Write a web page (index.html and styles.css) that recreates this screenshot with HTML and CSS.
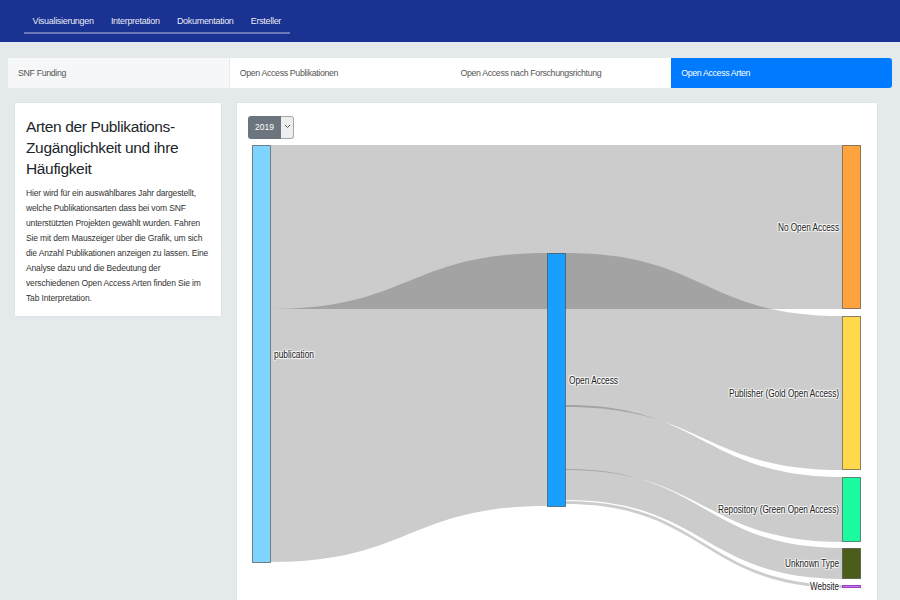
FILE: index.html
```html
<!DOCTYPE html>
<html lang="de">
<head>
<meta charset="utf-8">
<title>Open Access Arten</title>
<link rel="stylesheet" href="styles.css">
</head>
<body>
<header class="navbar">
  <ul class="nav">
    <li class="nav-item">Visualisierungen</li>
    <li class="nav-item">Interpretation</li>
    <li class="nav-item">Dokumentation</li>
    <li class="nav-item">Ersteller</li>
  </ul>
</header>
<nav class="tabs">
  <div class="tab tab-first">SNF Funding</div>
  <div class="tab">Open Access Publikationen</div>
  <div class="tab">Open Access nach Forschungsrichtung</div>
  <div class="tab tab-active">Open Access Arten</div>
</nav>
<main class="content">
  <aside class="card info">
    <h2 class="info-title">Arten der Publikations-Zugänglichkeit und ihre Häufigkeit</h2>
    <p class="info-text">Hier wird für ein auswählbares Jahr dargestellt, welche Publikationsarten dass bei vom SNF unterstützten Projekten gewählt wurden. Fahren Sie mit dem Mauszeiger über die Grafik, um sich die Anzahl Publikationen anzeigen zu lassen. Eine Analyse dazu und die Bedeutung der verschiedenen Open Access Arten finden Sie im Tab Interpretation.</p>
  </aside>
  <section class="card chart">
    <div class="toolbar">
      <div class="select">
        <span class="select-value">2019</span>
        <span class="select-caret"><svg width="7" height="5" viewBox="0 0 7 5"><path d="M1 1 L3.5 3.5 L6 1" fill="none" stroke="#555" stroke-width="1"/></svg></span>
      </div>
    </div>
    <svg class="sankey" width="640" height="459" viewBox="0 0 640 459">
      <g transform="translate(-237,-141)">
        <g class="links">
          <path d="M271,145 L842,145 L842,309 L271,309 Z"/>
          <path d="M271,309 C409,309 409,253 547,253 L547,506 C409,506 409,562 271,562 Z"/>
          <path d="M566,253 C704,253 704,316 842,316 L842,470 C704,470 704,407 566,407 Z"/>
          <path d="M566,405 C704,405 704,477 842,477 L842,542 C704,542 704,470 566,470 Z"/>
          <path d="M566,469 C704,469 704,548 842,548 L842,579 C704,579 704,500 566,500 Z"/>
          <path d="M566,501 C704,501 704,585 842,585 L842,588 C704,588 704,504 566,504 Z"/>
        </g>
        <g class="nodes">
          <rect x="252.5" y="145.5" width="18" height="417" fill="#7fd3ff"/>
          <rect x="547.5" y="253.5" width="18" height="253" fill="#199fff"/>
          <rect x="842.5" y="145.5" width="18" height="163" fill="#ffa33f"/>
          <rect x="842.5" y="316.5" width="18" height="153" fill="#ffd84c"/>
          <rect x="842.5" y="477.5" width="18" height="64" fill="#1cfba0"/>
          <rect x="842.5" y="548.5" width="18" height="30" fill="#4b5d1b"/>
          <rect class="node-thin" x="842.5" y="585.5" width="18" height="2" fill="#c77be6"/>
        </g>
        <g class="labels">
          <text x="274" y="354" textLength="40" lengthAdjust="spacingAndGlyphs">publication</text>
          <text x="569" y="380" textLength="49" lengthAdjust="spacingAndGlyphs">Open Access</text>
          <text class="end" x="839" y="227" textLength="61" lengthAdjust="spacingAndGlyphs">No Open Access</text>
          <text class="end" x="839" y="393" textLength="110" lengthAdjust="spacingAndGlyphs">Publisher (Gold Open Access)</text>
          <text class="end" x="839" y="509.5" textLength="121" lengthAdjust="spacingAndGlyphs">Repository (Green Open Access)</text>
          <text class="end" x="839" y="563.5" textLength="54" lengthAdjust="spacingAndGlyphs">Unknown Type</text>
          <text class="end" x="839" y="586.5" textLength="29" lengthAdjust="spacingAndGlyphs">Website</text>
        </g>
      </g>
    </svg>
  </section>
</main>
</body>
</html>
```
FILE: styles.css
```css
* { box-sizing: border-box; }

body {
  margin: 0;
  background: #e4e9ec;
  font-family: "Liberation Sans", Arial, sans-serif;
  color: #212529;
  overflow: hidden;
}

.navbar {
  height: 42px;
  background: #1a3291;
  padding: 10px 0 0 24px;
  display: flex;
  align-items: flex-start;
}

.nav {
  list-style: none;
  margin: 0;
  padding: 0;
  display: flex;
  border-bottom: 2px solid rgba(255, 255, 255, 0.35);
}

.nav-item {
  padding: 0 8.6px;
  line-height: 22px;
  font-size: 9px;
  letter-spacing: -0.3px;
  color: rgba(255, 255, 255, 0.93);
  white-space: nowrap;
}

.tabs {
  display: flex;
  margin: 16px 8px 0;
  height: 30px;
}

.tab {
  flex: 1;
  background: #fff;
  color: #555;
  font-size: 8.8px;
  letter-spacing: -0.35px;
  line-height: 30px;
  padding: 0 10px;
  white-space: nowrap;
}

.tab-first {
  background: #f6f7f8;
  border-right: 1px solid #e8eaec;
}

.tab-active {
  background: #007bff;
  color: #fff;
  border-radius: 0 3px 3px 0;
}

.content {
  display: flex;
  align-items: flex-start;
  gap: 16px;
  padding: 15px 23px 0 15px;
}

.card {
  background: #fff;
  box-shadow: 0 0 1px rgba(0, 0, 0, 0.12);
}

.info {
  width: 206px;
  flex: none;
  padding: 13px 11px 10px;
}

.info-title {
  margin: 0 0 7px;
  font-size: 15.5px;
  letter-spacing: -0.35px;
  line-height: 21px;
  font-weight: normal;
  color: #212529;
}

.info-text {
  margin: 0;
  font-size: 8.5px;
  letter-spacing: -0.15px;
  line-height: 15px;
  color: #333;
}

.chart {
  width: 640px;
  flex: none;
  height: 520px;
}

.toolbar {
  padding: 13px 11px 0;
  height: 36px;
}

.select {
  display: inline-flex;
  height: 23px;
}

.select-value {
  width: 33px;
  background: #6c757d;
  color: #fff;
  font-size: 8.5px;
  line-height: 23px;
  text-align: center;
  border-radius: 3px 0 0 3px;
}

.select-caret {
  width: 13px;
  background: #eceef0;
  border: 1px solid #a3a8ad;
  border-left: none;
  border-radius: 0 3px 3px 0;
  display: flex;
  justify-content: center;
  padding-top: 7px;
}

.sankey {
  display: block;
  margin-top: 2px;
}

.links path {
  fill: rgba(0, 0, 0, 0.2);
}

.nodes rect {
  stroke: rgba(40, 40, 40, 0.55);
  stroke-width: 1;
}

.nodes .node-thin {
  stroke: #9b3fc4;
}

.labels text {
  font-family: "Liberation Sans", Arial, sans-serif;
  font-size: 10px;
  fill: #222;
  dominant-baseline: central;
  text-shadow: 1px 1px 1px #fff, -1px -1px 1px #fff, 1px -1px 1px #fff, -1px 1px 1px #fff;
}

.labels .end {
  text-anchor: end;
}
```
